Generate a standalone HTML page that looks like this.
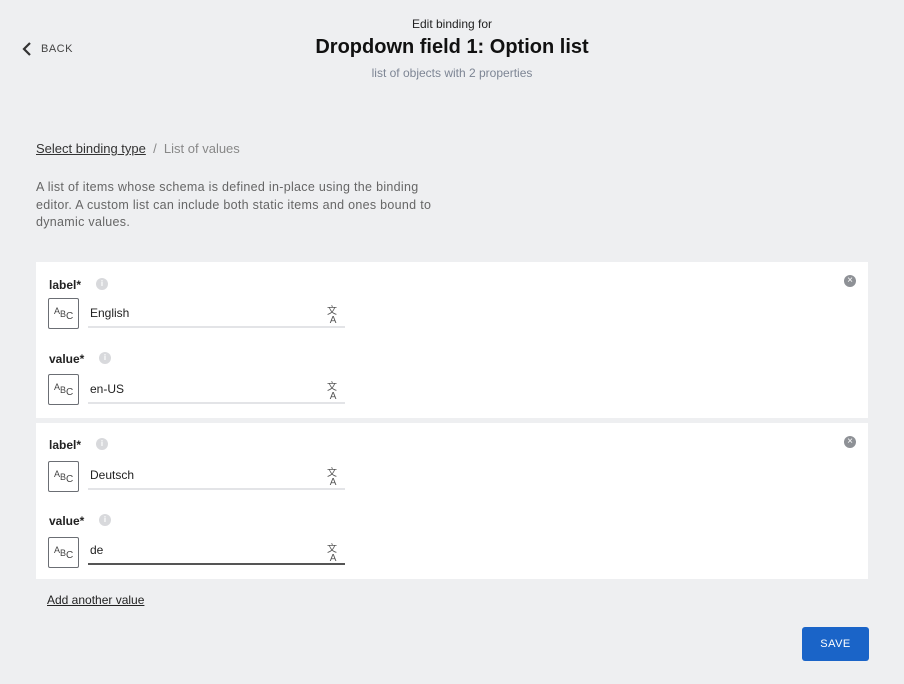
<!DOCTYPE html><html><head><style>
body{margin:0;width:904px;height:684px;background:#eeeff1;font-family:"Liberation Sans",sans-serif;position:relative;overflow:hidden;color:#222}
.a{position:absolute}
.card{position:absolute;left:36px;width:832px;background:#fff}
.lbl{position:absolute;left:13px;font-size:12px;font-weight:bold;color:#222}
.info{position:absolute;width:12px;height:12px;border-radius:50%;background:#d8d9dc;color:#fff;font-size:8px;text-align:center;line-height:12px;font-weight:bold}
.abc{position:absolute;left:12px;width:29px;height:29px;border:1.5px solid #6b6e74;border-radius:2px;font-size:9px;color:#444}
.inp{position:absolute;left:52px;width:257px;height:30px;border-bottom:2px solid #e3e4e7;font-size:12px;line-height:30px;padding-left:2px;box-sizing:border-box}
.tr{position:absolute;left:291px;font-size:10px;color:#555;line-height:9px}
.x{position:absolute;right:12px;width:12px;height:12px;border-radius:50%;background:#8e9196;color:#fff;font-size:10px;line-height:12px;text-align:center}
</style></head><body>
<div class="a" style="left:0;right:0;top:17px;text-align:center;font-size:12px">Edit binding for</div>
<div class="a" style="left:0;right:0;top:36px;text-align:center;font-size:20px;font-weight:bold;color:#111">Dropdown field 1: Option list</div>
<div class="a" style="left:0;right:0;top:66px;text-align:center;font-size:12px;color:#7d8594">list of objects with 2 properties</div>
<svg class="a" style="left:21px;top:42px" width="12" height="14"><path d="M9 1L3 7l6 6" stroke="#333" stroke-width="2.2" fill="none"/></svg>
<div class="a" style="left:41px;top:43px;font-size:11px;color:#444;letter-spacing:.5px">BACK</div>
<div class="a" style="left:36px;top:141px;font-size:13px;color:#333"><span style="text-decoration:underline">Select binding type</span><span style="color:#888">&nbsp; / &nbsp;List of values</span></div>
<div class="a" style="left:36px;top:179px;width:420px;font-size:12.5px;line-height:17.5px;color:#666;letter-spacing:.3px">A list of items whose schema is defined in-place using the binding editor. A custom list can include both static items and ones bound to dynamic values.</div>

<div class="card" style="top:262px;height:156px">
<div class="x" style="top:13px">×</div>
<div class="lbl" style="top:16px">label*</div><div class="info" style="left:60px;top:16px">i</div>
<div class="abc" style="top:36px"><span class="a" style="left:5px;top:7px">A<sub style="font-size:9px">B</sub><sub style="font-size:10px;vertical-align:-5px">C</sub></span></div>
<div class="inp" style="top:36px">English</div><div class="tr" style="top:45px">文<br>&nbsp;A</div>
<div class="lbl" style="top:90px">value*</div><div class="info" style="left:63px;top:90px">i</div>
<div class="abc" style="top:112px"><span class="a" style="left:5px;top:7px">A<sub style="font-size:9px">B</sub><sub style="font-size:10px;vertical-align:-5px">C</sub></span></div>
<div class="inp" style="top:112px">en-US</div><div class="tr" style="top:121px">文<br>&nbsp;A</div>
</div>
<div class="card" style="top:423px;height:156px">
<div class="x" style="top:13px">×</div>
<div class="lbl" style="top:15px">label*</div><div class="info" style="left:60px;top:15px">i</div>
<div class="abc" style="top:38px"><span class="a" style="left:5px;top:7px">A<sub style="font-size:9px">B</sub><sub style="font-size:10px;vertical-align:-5px">C</sub></span></div>
<div class="inp" style="top:37px">Deutsch</div><div class="tr" style="top:46px">文<br>&nbsp;A</div>
<div class="lbl" style="top:91px">value*</div><div class="info" style="left:63px;top:91px">i</div>
<div class="abc" style="top:114px"><span class="a" style="left:5px;top:7px">A<sub style="font-size:9px">B</sub><sub style="font-size:10px;vertical-align:-5px">C</sub></span></div>
<div class="inp" style="top:112px;border-bottom-color:#555">de</div><div class="tr" style="top:122px">文<br>&nbsp;A</div>
</div>
<div class="a" style="left:47px;top:593px;font-size:12px;text-decoration:underline;color:#222">Add another value</div>
<div class="a" style="left:802px;top:627px;width:67px;height:34px;background:#1a64c8;border-radius:3px;color:#fff;font-size:11px;line-height:34px;text-align:center;letter-spacing:.5px">SAVE</div>
</body></html>
